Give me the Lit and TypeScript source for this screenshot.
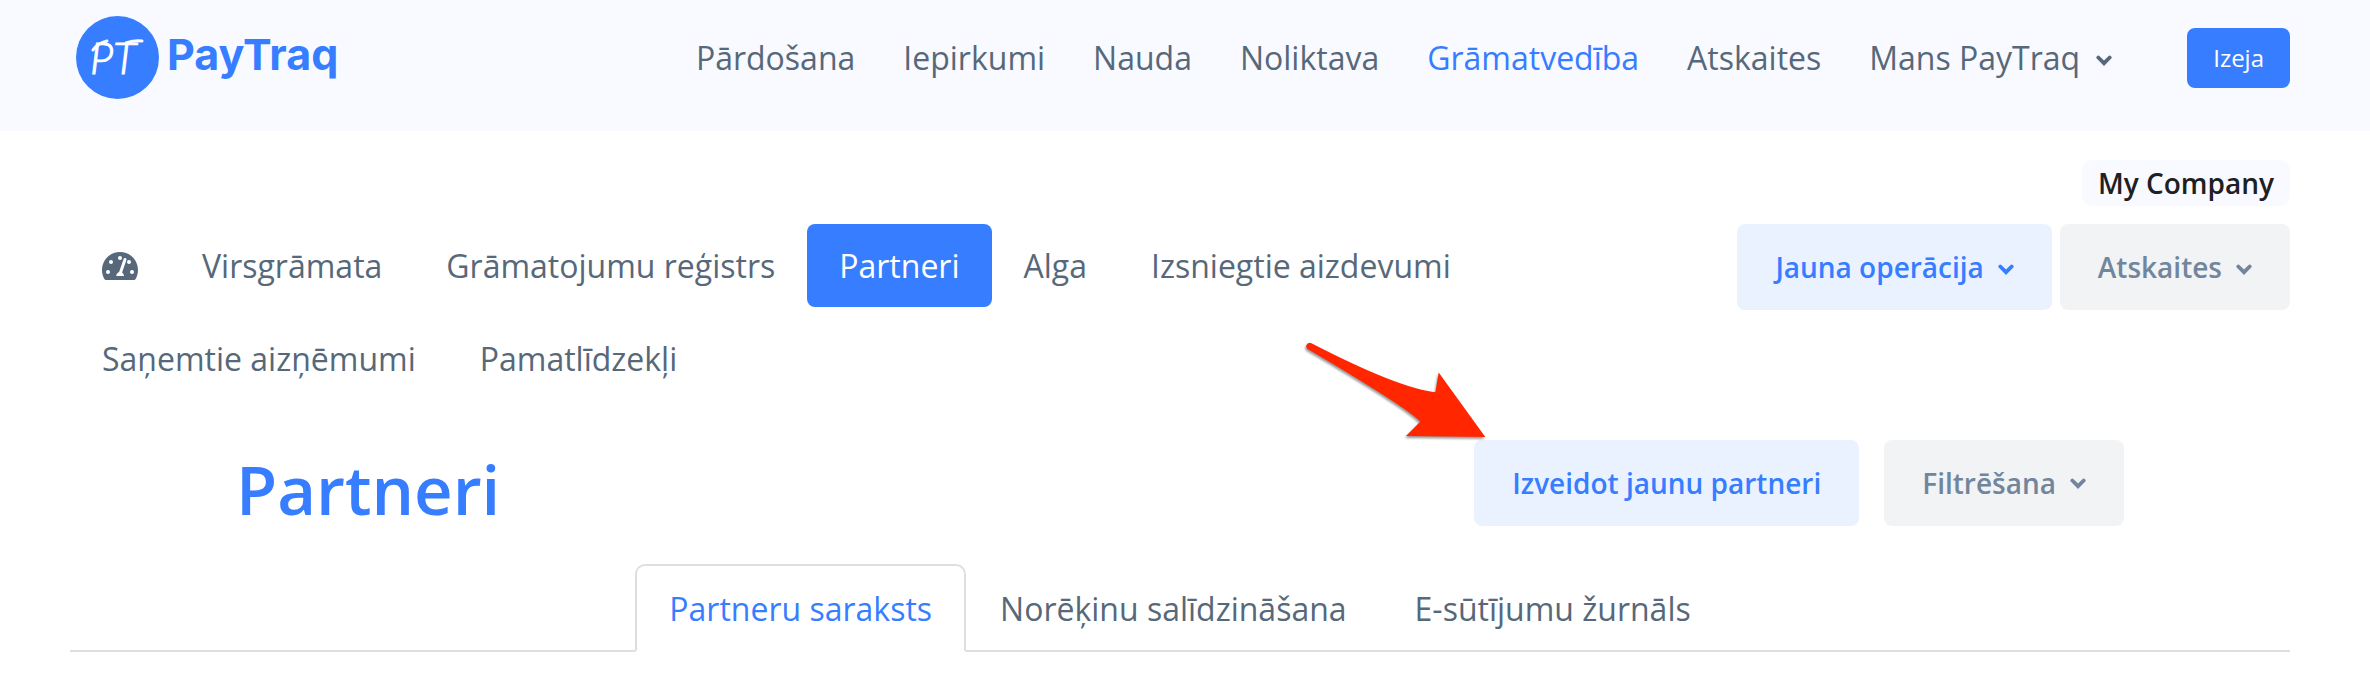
import { LitElement, html, css, svg } from "lit";
import { customElement } from "lit/decorators.js";
import { classMap } from "lit/directives/class-map.js";

const chevron = html`
  <svg class="chevron" viewBox="0 0 16 11" width="16" height="11" aria-hidden="true">
    <path d="M2.3 2.5 L8 8.2 L13.7 2.5" fill="none" stroke="currentColor" stroke-width="3.8" stroke-linecap="round" />
  </svg>
`;

const gaugeDots = [
  [6, 20],
  [9, 10],
  [18, 6],
  [27, 10],
  [30, 20],
];

const gauge = html`
  <svg class="gauge" viewBox="0 0 36 28" width="36" height="28" role="img" aria-label="Panelis">
    <path
      d="M18 0C8 0 0 8 0 18c0 3.300.9 6.400 2.400 9.100.3.600.9.900 1.500.9h28.200c.6 0 1.200-.3 1.500-.9C35.100 24.400 36 21.300 36 18 36 8 28 0 18 0z"
      fill="currentColor"
    />
    ${gaugeDots.map(([x, y]) => svg`<circle cx=${x} cy=${y} r="2" fill="#fff" />`)}
    <path d="M23 7.500 L18.500 20.500" stroke="#fff" stroke-width="3" stroke-linecap="round" />
    <path d="M14.200 24c0-2.300 1.700-4 3.900-4s3.900 1.700 3.900 4z" fill="#fff" />
  </svg>
`;

const mainMenu = ["Pārdošana", "Iepirkumi", "Nauda", "Noliktava", "Grāmatvedība", "Atskaites"];
const sections = [
  "Virsgrāmata",
  "Grāmatojumu reģistrs",
  "Partneri",
  "Alga",
  "Izsniegtie aizdevumi",
  "Saņemtie aizņēmumi",
  "Pamatlīdzekļi",
];
const tabs = ["Partneru saraksts", "Norēķinu salīdzināšana", "E-sūtījumu žurnāls"];

@customElement("app-root")
export class AppRoot extends LitElement {
  static styles = css`
    :host {
      display: block;
      min-height: 100vh;
      background: #fff;
      color: #566879;
      font-family: "Open Sans", "Noto Sans", sans-serif;
      font-size: 32px;
      line-height: 44px;
    }
    * {
      box-sizing: border-box;
    }
    a {
      color: inherit;
      text-decoration: none;
      white-space: nowrap;
    }
    button {
      border: 0;
      font: inherit;
      white-space: nowrap;
      cursor: pointer;
    }
    .header {
      display: flex;
      align-items: center;
      padding: 16px 80px 32px 76px;
      background: #f9faff;
    }
    .brand {
      display: flex;
      align-items: center;
      gap: 8px;
      color: #377dff;
      font: 700 43px/52px Inter, sans-serif;
    }
    .wordmark {
      padding-bottom: 8px;
    }
    .mark {
      display: block;
    }
    .monogram {
      font: italic 300 43px Lato, sans-serif;
    }
    .menu {
      display: flex;
      align-items: center;
      gap: 48px;
      margin-left: auto;
    }
    .menu-button {
      display: flex;
      align-items: center;
      gap: 16px;
      padding: 0;
      background: none;
      color: inherit;
    }
    .current {
      color: #377dff;
    }
    .chevron {
      flex: none;
      margin-top: 5px;
    }
    .exit {
      height: 60px;
      margin-left: 75px;
      padding: 0 26px;
      border-radius: 8px;
      background: #377dff;
      color: #fff;
      font-size: 24px;
    }
    .content {
      padding: 29px 80px 28px 70px;
    }
    .company {
      display: flex;
      justify-content: flex-end;
    }
    .badge {
      padding: 0 16px;
      border-radius: 10px;
      background: #f9faff;
      color: #1e2022;
      font-size: 28px;
      font-weight: 600;
      line-height: 46px;
    }
    .toolbar {
      display: flex;
      align-items: flex-start;
      margin-top: 18px;
    }
    .pills {
      display: flex;
      flex: 1;
      flex-wrap: wrap;
      row-gap: 10px;
    }
    .pill {
      display: flex;
      align-items: center;
      height: 83px;
      padding: 0 32px;
      border-radius: 8px;
    }
    .pill.active {
      background: #377dff;
      color: #fff;
    }
    .actions {
      display: flex;
      gap: 8px;
    }
    .soft {
      display: flex;
      align-items: center;
      gap: 14px;
      height: 86px;
      padding: 0 38px;
      border-radius: 8px;
      background: #f1f3f5;
      color: #71869d;
      font-size: 28px;
      font-weight: 600;
    }
    .soft.primary {
      background: #ebf2ff;
      color: #377dff;
    }
    .heading {
      display: flex;
      align-items: flex-start;
      justify-content: space-between;
      margin-top: 40px;
      padding: 0 166px;
    }
    .title {
      margin: 0;
      padding-top: 8px;
      color: #377dff;
      font-size: 67px;
      font-weight: 600;
      line-height: 82px;
    }
    .heading .actions {
      gap: 25px;
    }
    .heading .chevron {
      margin-top: 0;
    }
    .callout {
      position: relative;
    }
    .arrow {
      position: absolute;
      left: -174px;
      top: -100px;
      pointer-events: none;
      filter: drop-shadow(-1px 2px 1px rgba(0, 0, 0, 0.4));
    }
    .tabs {
      display: flex;
      justify-content: center;
      margin-top: 34px;
      border-bottom: 2px solid #dedede;
    }
    .tab {
      height: 88px;
      margin-bottom: -2px;
      padding: 21px 32px;
      border: 2px solid transparent;
      border-radius: 10px 10px 0 0;
    }
    .tab.active {
      border-color: #dedede;
      border-bottom-color: #fff;
      background: #fff;
      color: #377dff;
    }
  `;

  render() {
    return html`
      <header class="header">
        <a class="brand" href="#">
          <svg class="mark" viewBox="0 0 83 83" width="83" height="83" aria-hidden="true">
            <circle cx="41.500" cy="41.500" r="41.500" fill="#377dff" />
            <text class="monogram" x="14" y="58" fill="#fff" stroke="#fff" stroke-width="1">PT</text>
            <path d="M17 34 Q22 27 31 25 M50 27 Q59 24 66 25" fill="none" stroke="#fff" stroke-width="3" stroke-linecap="round" />
          </svg>
          <span class="wordmark">PayTraq</span>
        </a>
        <nav class="menu" aria-label="Galvenā izvēlne">
          ${mainMenu.map(
            (item) => html`<a href="#" class=${classMap({ current: item === "Grāmatvedība" })}>${item}</a>`,
          )}
          <button class="menu-button" aria-haspopup="true">Mans PayTraq ${chevron}</button>
        </nav>
        <button class="exit">Izeja</button>
      </header>

      <main class="content">
        <div class="company"><span class="badge">My Company</span></div>

        <div class="toolbar">
          <nav class="pills" aria-label="Grāmatvedība">
            <a class="pill" href="#">${gauge}</a>
            ${sections.map(
              (item) => html`<a href="#" class=${classMap({ pill: true, active: item === "Partneri" })}>${item}</a>`,
            )}
          </nav>
          <div class="actions">
            <button class="soft primary" aria-haspopup="true">Jauna operācija ${chevron}</button>
            <button class="soft" aria-haspopup="true">Atskaites ${chevron}</button>
          </div>
        </div>

        <div class="heading">
          <h1 class="title">Partneri</h1>
          <div class="actions">
            <div class="callout">
              <button class="soft primary">Izveidot jaunu partneri</button>
              <svg class="arrow" viewBox="0 0 200 110" width="200" height="110" aria-hidden="true">
                <path
                  d="M11.500 3.300 Q98 48 135.400 52.300 L138.700 32.500 L185.300 97 L106 96 L120.200 81.700 Q108 68 8 9.200 A3.400 3.400 0 0 1 11.500 3.300Z"
                  fill="#ff2600"
                />
              </svg>
            </div>
            <button class="soft" aria-haspopup="true">Filtrēšana ${chevron}</button>
          </div>
        </div>

        <nav class="tabs" aria-label="Partneri">
          ${tabs.map((item, i) => html`<a href="#" class=${classMap({ tab: true, active: i === 0 })}>${item}</a>`)}
        </nav>
      </main>
    `;
  }
}
